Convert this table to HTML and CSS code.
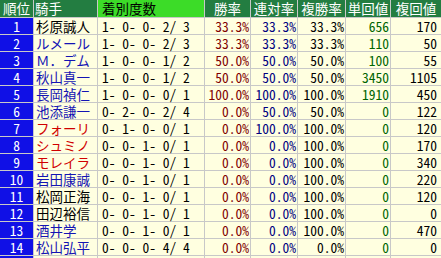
FILE: index.html
```html
<!DOCTYPE html>
<html lang="ja">
<head>
<meta charset="utf-8">
<link rel="stylesheet" href="styles.css">
</head>
<body>
<div class="frame">
<div class="board">
  <div class="row head">
    <div class="hc">順位</div>
    <div class="hc left">騎手</div>
    <div class="hc bright left4">着別度数</div>
    <div class="hc center">勝率</div>
    <div class="hc center">連対率</div>
    <div class="hc center">複勝率</div>
    <div class="hc center">単回値</div>
    <div class="hc center">複回値</div>
  </div>
  <div class="row"><div class="rank">1</div><div class="name blk">杉原誠人</div><div class="rec">1- 0- 0- 2/ 3</div><div class="num win">33.3%</div><div class="num ren">33.3%</div><div class="num fuku">33.3%</div><div class="num tan">656</div><div class="num last">170</div></div>
  <div class="row"><div class="rank">2</div><div class="name blu">ルメール</div><div class="rec">1- 0- 0- 2/ 3</div><div class="num win">33.3%</div><div class="num ren">33.3%</div><div class="num fuku">33.3%</div><div class="num tan">110</div><div class="num last">50</div></div>
  <div class="row"><div class="rank">3</div><div class="name blu">Ｍ．デム</div><div class="rec">1- 0- 0- 1/ 2</div><div class="num win">50.0%</div><div class="num ren">50.0%</div><div class="num fuku">50.0%</div><div class="num tan">100</div><div class="num last">55</div></div>
  <div class="row"><div class="rank">4</div><div class="name blu">秋山真一</div><div class="rec">1- 0- 0- 1/ 2</div><div class="num win">50.0%</div><div class="num ren">50.0%</div><div class="num fuku">50.0%</div><div class="num tan">3450</div><div class="num last">1105</div></div>
  <div class="row"><div class="rank">5</div><div class="name blu">長岡禎仁</div><div class="rec">1- 0- 0- 0/ 1</div><div class="num win">100.0%</div><div class="num ren">100.0%</div><div class="num fuku">100.0%</div><div class="num tan">1910</div><div class="num last">450</div></div>
  <div class="row"><div class="rank">6</div><div class="name blu">池添謙一</div><div class="rec">0- 2- 0- 2/ 4</div><div class="num win">0.0%</div><div class="num ren">50.0%</div><div class="num fuku">50.0%</div><div class="num tan">0</div><div class="num last">122</div></div>
  <div class="row"><div class="rank">7</div><div class="name red">フォーリ</div><div class="rec">0- 1- 0- 0/ 1</div><div class="num win">0.0%</div><div class="num ren">100.0%</div><div class="num fuku">100.0%</div><div class="num tan">0</div><div class="num last">120</div></div>
  <div class="row"><div class="rank">8</div><div class="name red">シュミノ</div><div class="rec">0- 0- 1- 0/ 1</div><div class="num win">0.0%</div><div class="num ren">0.0%</div><div class="num fuku">100.0%</div><div class="num tan">0</div><div class="num last">170</div></div>
  <div class="row"><div class="rank">9</div><div class="name red">モレイラ</div><div class="rec">0- 0- 1- 0/ 1</div><div class="num win">0.0%</div><div class="num ren">0.0%</div><div class="num fuku">100.0%</div><div class="num tan">0</div><div class="num last">340</div></div>
  <div class="row"><div class="rank">10</div><div class="name blu">岩田康誠</div><div class="rec">0- 0- 1- 0/ 1</div><div class="num win">0.0%</div><div class="num ren">0.0%</div><div class="num fuku">100.0%</div><div class="num tan">0</div><div class="num last">220</div></div>
  <div class="row"><div class="rank">11</div><div class="name blk">松岡正海</div><div class="rec">0- 0- 1- 0/ 1</div><div class="num win">0.0%</div><div class="num ren">0.0%</div><div class="num fuku">100.0%</div><div class="num tan">0</div><div class="num last">120</div></div>
  <div class="row"><div class="rank">12</div><div class="name blk">田辺裕信</div><div class="rec">0- 0- 1- 0/ 1</div><div class="num win">0.0%</div><div class="num ren">0.0%</div><div class="num fuku">100.0%</div><div class="num tan">0</div><div class="num last">0</div></div>
  <div class="row"><div class="rank">13</div><div class="name blu">酒井学</div><div class="rec">0- 0- 1- 0/ 1</div><div class="num win">0.0%</div><div class="num ren">0.0%</div><div class="num fuku">100.0%</div><div class="num tan">0</div><div class="num last">470</div></div>
  <div class="row"><div class="rank">14</div><div class="name blu">松山弘平</div><div class="rec">0- 0- 0- 4/ 4</div><div class="num win">0.0%</div><div class="num ren">0.0%</div><div class="num fuku">0.0%</div><div class="num tan">0</div><div class="num last">0</div></div>
  <div class="row"><div class="rank"></div><div class="name blu"></div><div class="rec"></div><div class="num"></div><div class="num"></div><div class="num"></div><div class="num"></div><div class="num last"></div></div>
</div>
</div>
</body>
</html>
```
FILE: styles.css
```css
html, body {
  margin: 0;
  padding: 0;
  overflow: hidden;
  background: #ffffff;
}
.frame {
  width: 441px;
  height: 258px;
  overflow: hidden;
}
.board {
  display: flex;
  flex-direction: column;
  gap: 1px;
  background: #c8c8c8;
  width: 441px;
  font-family: "Noto Sans CJK JP", sans-serif;
}
.row {
  display: grid;
  grid-template-columns: 33px 63px 106px 45px 46px 47px 44px 50px;
  gap: 1px;
  height: 16px;
}
.row.head {
  height: 17px;
}
.row > div {
  white-space: pre;
  background: #ffffe0;
}
.hc {
  background: #237d41 !important;
  color: #ffffff;
  font-size: 13.5px;
  line-height: 17px;
  text-align: center;
}
.hc.left { text-align: left; padding-left: 1px; }
.hc.left4 { text-align: left; padding-left: 4px; }
.hc.bright { background: #3cdc28 !important; color: #000000; }
.rank {
  background: #1010e6 !important;
  color: #ffffff;
  text-align: center;
  font-size: 13.5px;
  line-height: 16px;
  font-feature-settings: "hwid";
}
.name {
  font-size: 13.5px;
  line-height: 16px;
  padding-left: 2px;
}
.blk { color: #000000; }
.blu { color: #1414b4; }
.red { color: #d00000; }
.rec, .num {
  font-size: 13.5px;
  line-height: 16px;
  font-feature-settings: "hwid";
  color: #000000;
}
.rec { padding-left: 4px; }
.num { text-align: right; padding-right: 1px; }
.num.last { padding-right: 4px; }
.win { color: #800000 !important; }
.ren { color: #000080 !important; }
.tan { color: #006400 !important; }
```
